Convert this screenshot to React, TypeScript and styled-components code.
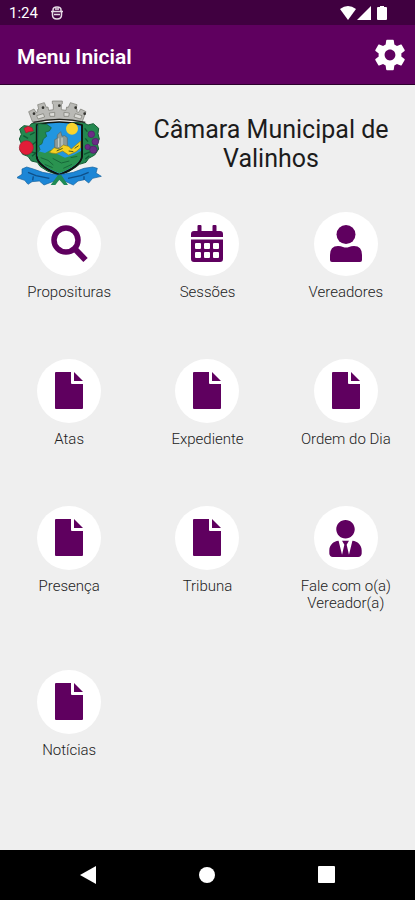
import React from "react";
import styled, { createGlobalStyle } from "styled-components";
import { FaUserTie } from "react-icons/fa";

const PURPLE = "#5f005f";

const GlobalStyle = createGlobalStyle`
  * { box-sizing: border-box; }
  body { margin: 0; background: #efefef; }
  body, button { font-family: Roboto, "Liberation Sans", sans-serif; }
  button { border: 0; padding: 0; background: none; color: inherit; cursor: pointer; }
  svg { display: block; }
`;

const Screen = styled.div`
  min-height: 100vh;
  display: flex;
  flex-direction: column;
`;

const StatusBar = styled.div`
  height: 25px;
  padding: 0 27px 0 9px;
  display: flex;
  align-items: center;
  gap: 13px;
  background: #400040;
  color: #fff;
  font-size: 15px;
`;

const StatusIcons = styled.div`
  margin-left: auto;
  display: flex;
  align-items: center;
  gap: 1px;
`;

const AppBar = styled.header`
  height: 60px;
  padding: 0 6px 0 17px;
  display: flex;
  align-items: center;
  justify-content: space-between;
  background: ${PURPLE};
  color: #fff;
  border-bottom: 1px solid #2c002c;
`;

const Title = styled.h1`
  margin: 0;
  padding-top: 4px;
  font-size: 21px;
  line-height: 26px;
  font-weight: 600;
`;

const Main = styled.main`
  flex: 1;
`;

const Banner = styled.section`
  padding: 14px 12px 0 17px;
  display: flex;
  align-items: flex-start;
  gap: 16px;
`;

const BannerText = styled.h2`
  flex: 1;
  margin: 0;
  padding: 16px 0 0 20px;
  text-align: center;
  font-size: 25px;
  line-height: 29px;
  font-weight: 400;
  color: #1c1c1c;
`;

const Grid = styled.div`
  margin-top: 25px;
  display: grid;
  grid-template-columns: repeat(3, 1fr);
`;

const Tile = styled.button`
  padding-bottom: 58px;
  display: flex;
  flex-direction: column;
  align-items: center;
  gap: 8px;
`;

const Disc = styled.span`
  width: 64px;
  height: 64px;
  display: grid;
  place-items: center;
  border-radius: 50%;
  background: #fff;
  color: ${PURPLE};
`;

const Label = styled.span`
  max-width: 110px;
  font-size: 15px;
  line-height: 17px;
  font-weight: 300;
  color: #222;
`;

const NavBar = styled.nav`
  height: 50px;
  padding: 0 28px;
  display: grid;
  grid-template-columns: repeat(3, 1fr);
  place-items: center;
  background: #000;
`;

const Crest = () => (
  <svg width="86" height="88" viewBox="21 12 258 264" role="img" aria-label="Brasão de Valinhos">
    <path fill="#23884f" stroke="#155c34" strokeWidth="3" strokeLinejoin="round" d="M82 84l-18 2-6 8-16-2-13 10 5 16-6 14 6 14-4 18 8 14 16 6 10 14 18 4 8 12 22 14 32 12 32-10 22-14 10-8 20-6 8-12 18-10 12-18-4-16 6-14-4-16 2-16-16-14-16 4-16-8z" />
    <g fill="none" stroke="#0f5a33" strokeWidth="4">
      <path d="M60 120l14-8M40 122l14 8M66 150l12-10M62 170l14 4M66 184l16-14M224 100l8 10M226 130l8 10M222 178l20-8M226 192l12-10" />
    </g>
    <path fill="#2196e0" stroke="#101410" strokeWidth="5" d="M80 90Q148 72 216 90V184Q212 214 148 239Q84 214 80 184z" />
    <path fill="#2a9350" d="M83 168l22 6 18-10 12 10 30 14 26-8 22-12v18Q208 212 148 235Q86 212 83 184z" />
    <path fill="#23884f" stroke="#155c34" strokeWidth="2" d="M84 86l26 2 14 10-6 10-12 4 4 12-10 8-4 14-10 6 4 12-8 8z" />
    <circle cx="186" cy="101" r="18" fill="#f8d42c" />
    <path fill="#8d9a96" stroke="#5c6765" strokeWidth="2" d="M134 158v-24l8-4v-10l10-10 4 14 8-2 8 6v26l-18 8z" />
    <path fill="none" stroke="#d2d8d2" strokeWidth="3" d="M146 130v26M156 128v24" />
    <path fill="#f5d121" stroke="#8d7d18" strokeWidth="2" d="M118 172l14-14 14 4 14-12 16 4 8 8 16-14 12-10v20l-14 12-22 10-18-12-20 8-14-2z" />
    <path fill="none" stroke="#4b5720" strokeWidth="3" d="M140 168l18-8M176 168l14 2M194 160l12-8" />
    <path fill="none" stroke="#17693a" strokeWidth="3" d="M92 188l22 8 16 14M128 190l26 14 24-6M104 208l24 10M160 220l26-12M182 188l20-4" />
    <path fill="none" stroke="#101410" strokeWidth="5" d="M216 90V184Q212 214 148 239Q84 214 80 184" />
    <g fill="#e11d38" stroke="#a51a30" strokeWidth="2">
      <circle cx="49" cy="158" r="21" />
      <path d="M42 100l12-6 12 4 4 10-14 2-8 4z" />
    </g>
    <g fill="#6b2c86" stroke="#4a1f60" strokeWidth="2">
      <circle cx="244" cy="118" r="10" />
      <circle cx="256" cy="140" r="10" />
      <circle cx="233" cy="156" r="8" />
      <circle cx="250" cy="164" r="11" />
    </g>
    <g fill="#b9b9b5" stroke="#77776f" strokeWidth="2" strokeLinejoin="round">
      <path d="M68 82L56 50l16-8 6 10 6-2-2-6 4-1-3-14 20-6 6 14 5-1 2 10 14-2V28l-3-2v-8h30v8l-3 2v16l14 2 2-10 5 1 6-14 20 6-3 14 4 1-2 6 6 2 6-10 16 8-12 32-22-4Q148 66 90 80z" />
      <path fill="#dcdcd8" d="M80 62l20-6 4 10-20 6zM118 54l16-2v12h-14zM162 52l16 2-2 10h-14zM196 56l20 6-4 10-20-6z" />
    </g>
    <g fill="#33332f">
      <circle cx="72" cy="56" r="4" /><circle cx="99" cy="38" r="4" /><circle cx="148" cy="32" r="4" /><circle cx="197" cy="38" r="4" /><circle cx="224" cy="56" r="4" />
    </g>
    <path fill="none" stroke="#23231f" strokeWidth="4" d="M70 82Q148 64 226 82" />
    <path fill="#1c86d6" stroke="#125f9c" strokeWidth="2" strokeLinejoin="round" d="M36 222l14-6 20 6 28 10 46 8 46-8 32-12 26-4 14 4-4 14 16 10-26 6-12 14-12-10-20 4-14 12-22-10-20-6-20 6-26 10-14-12-22 2-12 8-10-12-24-8 16-10z" />
    <path fill="none" stroke="#0f4f88" strokeWidth="4" d="M54 232l24 10 40 8M236 232l-24 10-38 8M70 244l-2 12M222 244v10" />
    <path fill="#1f8a55" d="M144 240l-22 30h14l12-16 14 16h12l-20-30z" />
  </svg>
);

const SearchIcon = () => (
  <svg width="38" height="38" viewBox="0 0 38 38" fill="none" stroke="currentColor">
    <circle cx="16" cy="15" r="12" strokeWidth="5.500" />
    <path d="M25 24l10.500 11" strokeWidth="6" />
  </svg>
);

const CalendarIcon = () => (
  <svg width="34" height="38" viewBox="0 0 34 38" fill="currentColor" fillRule="evenodd">
    <path d="M8.500 0h2q1 0 1 1v5h11V1q0-1 1-1h2q1 0 1 1v5H30q3 0 3 3v3H1V9q0-3 3-3h3.500V1q0-1 1-1z" />
    <path d="M1 14.500h32V34q0 3-3 3H4q-3 0-3-3zM6 18q-1 0-1 1v4q0 1 1 1h4q1 0 1-1v-4q0-1-1-1zm9 0q-1 0-1 1v4q0 1 1 1h4q1 0 1-1v-4q0-1-1-1zm9 0q-1 0-1 1v4q0 1 1 1h4q1 0 1-1v-4q0-1-1-1zM6 27q-1 0-1 1v4q0 1 1 1h4q1 0 1-1v-4q0-1-1-1zm9 0q-1 0-1 1v4q0 1 1 1h4q1 0 1-1v-4q0-1-1-1zm9 0q-1 0-1 1v4q0 1 1 1h4q1 0 1-1v-4q0-1-1-1z" />
  </svg>
);

const UserIcon = () => (
  <svg width="34" height="38" viewBox="0 0 34 38" fill="currentColor">
    <circle cx="17" cy="9.500" r="9.500" />
    <path d="M9 21q3 0 5 1 3 1 6 0 2-1 5-1 8 0 8 9v5q0 2-2 2H3q-2 0-2-2v-5q0-9 8-9z" />
  </svg>
);

const FileIcon = () => (
  <svg width="28" height="38" viewBox="0 0 28 38" fill="currentColor">
    <path d="M1 0h15v11q0 1 1 1h11v24q0 1-1 1H1q-1 0-1-1V1q0-1 1-1z" />
    <path d="M19 0l9 9h-9z" />
  </svg>
);

const GearIcon = () => (
  <svg width="38" height="38" viewBox="0 0 24 24" fill="currentColor">
    <path d="M19.140 12.940c.04-.3.06-.61.06-.94 0-.32-.02-.64-.07-.94l2.030-1.580c.18-.14.23-.41.12-.61l-1.920-3.320c-.12-.22-.37-.29-.59-.22l-2.390.96c-.5-.38-1.030-.7-1.620-.94l-.36-2.540c-.04-.24-.24-.41-.48-.41h-3.840c-.24 0-.43.17-.47.41l-.36 2.540c-.59.24-1.130.57-1.620.94l-2.390-.96c-.22-.08-.47 0-.59.22L2.740 8.870c-.12.21-.08.47.12.61l2.030 1.580c-.05.3-.09.63-.09.94s.02.64.07.94l-2.030 1.580c-.18.14-.23.41-.12.61l1.920 3.320c.12.22.37.29.59.22l2.390-.96c.5.38 1.030.7 1.620.94l.36 2.540c.05.24.24.41.48.41h3.840c.24 0 .44-.17.47-.41l.36-2.540c.59-.24 1.130-.56 1.620-.94l2.390.96c.22.08.47 0 .59-.22l1.920-3.320c.12-.22.07-.47-.12-.61l-2.010-1.580zM12 15.400c-1.880 0-3.400-1.520-3.400-3.400s1.520-3.400 3.400-3.400 3.400 1.520 3.400 3.400-1.520 3.400-3.400 3.400z" />
  </svg>
);

const TieIcon = () => <FaUserTie size={37} />;

const items = [
  { label: "Proposituras", Icon: SearchIcon },
  { label: "Sessões", Icon: CalendarIcon },
  { label: "Vereadores", Icon: UserIcon },
  { label: "Atas", Icon: FileIcon },
  { label: "Expediente", Icon: FileIcon },
  { label: "Ordem do Dia", Icon: FileIcon },
  { label: "Presença", Icon: FileIcon },
  { label: "Tribuna", Icon: FileIcon },
  { label: "Fale com o(a) Vereador(a)", Icon: TieIcon },
  { label: "Notícias", Icon: FileIcon },
];

export default function App() {
  return (
    <Screen>
      <GlobalStyle />
      <StatusBar>
        <span>1:24</span>
        <svg width="12" height="14" viewBox="0 0 12 14" fill="none" stroke="#e6dce6" strokeWidth="1.500">
          <path d="M2 5V4q0-3 4-3t4 3v1M0 5.500h12M1.500 6v3q0 4 4.500 4t4.500-4V6M4 3h4" />
          <path d="M3 8.500h6" />
        </svg>
        <StatusIcons>
          <svg width="16" height="14" viewBox="0 0 16 14" fill="#fff"><path d="M0 3q8-6 16 0L8 14z" /></svg>
          <svg width="14" height="14" viewBox="0 0 14 14" fill="#fff"><path d="M14 0v14H0z" /></svg>
          <svg width="16" height="14" viewBox="0 0 16 14" fill="#fff"><path d="M8 0h4v1h2q1 0 1 1v11q0 1-1 1H6q-1 0-1-1V2q0-1 1-1h2z" /></svg>
        </StatusIcons>
      </StatusBar>
      <AppBar>
        <Title>Menu Inicial</Title>
        <button aria-label="Configurações"><GearIcon /></button>
      </AppBar>
      <Main>
        <Banner>
          <Crest />
          <BannerText>Câmara Municipal de Valinhos</BannerText>
        </Banner>
        <Grid>
          {items.map(({ label, Icon }) => (
            <Tile key={label}>
              <Disc><Icon /></Disc>
              <Label>{label}</Label>
            </Tile>
          ))}
        </Grid>
      </Main>
      <NavBar>
        <button aria-label="Voltar">
          <svg width="16" height="18" viewBox="0 0 16 18" fill="#fff"><path d="M16 0v18L0 9z" /></svg>
        </button>
        <button aria-label="Início">
          <svg width="16" height="16" viewBox="0 0 16 16" fill="#fff"><circle cx="8" cy="8" r="8" /></svg>
        </button>
        <button aria-label="Recentes">
          <svg width="18" height="18" viewBox="0 0 18 18" fill="#fff"><rect width="17" height="17" rx="1" /></svg>
        </button>
      </NavBar>
    </Screen>
  );
}
